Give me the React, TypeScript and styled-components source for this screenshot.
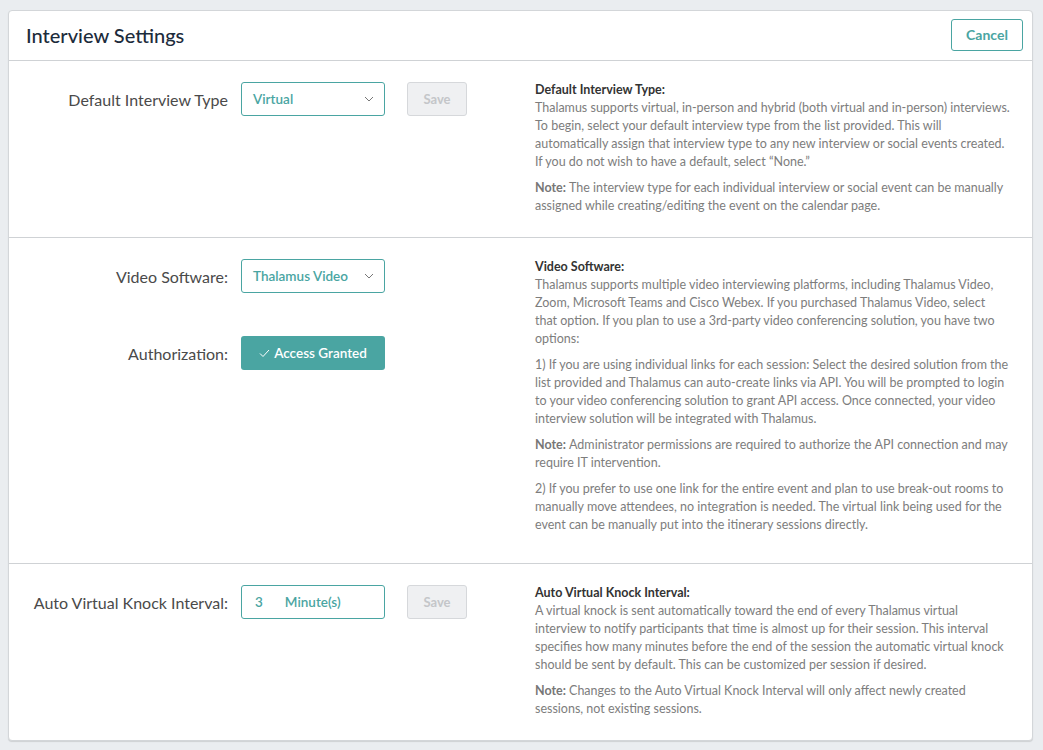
import React, { FC } from 'react';
import styled, { createGlobalStyle } from 'styled-components';

const teal = '#4aa5a2';

const GlobalStyle = createGlobalStyle`
  * {
    box-sizing: border-box;
  }

  body {
    margin: 0;
    background-color: #eaedf0;
    font-family: Lato, 'Open Sans', Arial, sans-serif;
  }
`;

const Page = styled.div`
  padding: 10px 10px 10px 8px;
`;

const Card = styled.div`
  background-color: #fff;
  border: 1px solid #d3d6d9;
  border-radius: 4px;
  box-shadow: 0 1px 1px rgba(0, 0, 0, 0.12);
`;

const Header = styled.div`
  height: 50px;
  display: flex;
  align-items: center;
  justify-content: space-between;
  padding: 0 9px 2px 17px;
  border-bottom: 1px solid #cfd2d5;
`;

const Title = styled.h1`
  margin: 0;
  font-size: 20px;
  font-weight: 500;
  color: #1c2b3b;
`;

const CancelButton = styled.button`
  width: 72px;
  height: 32px;
  border: 1px solid ${teal};
  border-radius: 3px;
  background-color: #fff;
  color: ${teal};
  font-family: inherit;
  font-size: 14px;
  font-weight: 700;
  cursor: pointer;
`;

const Section = styled.div<{ $minHeight: number; $last?: boolean }>`
  display: flex;
  min-height: ${(p) => p.$minHeight}px;
  padding: 21px 12px 13px 0;
  border-bottom: ${(p) => (p.$last ? 'none' : '1px solid #cfd2d5')};
`;

const Controls = styled.div<{ $gap: number }>`
  width: 526px;
  flex-shrink: 0;
  display: flex;
  flex-direction: column;
  gap: ${(p) => p.$gap}px;
`;

const Row = styled.div`
  display: flex;
  align-items: center;
`;

const Label = styled.label`
  width: 219px;
  padding-right: 13px;
  text-align: right;
  font-size: 16px;
  color: #4a4a4a;
  flex-shrink: 0;
  box-sizing: content-box;
`;

const SelectBox = styled.div`
  width: 144px;
  height: 34px;
  border: 1px solid ${teal};
  border-radius: 3px;
  display: flex;
  align-items: center;
  justify-content: space-between;
  padding: 0 10px 0 11px;
  color: ${teal};
  font-size: 13.5px;
  font-weight: 600;
`;

const IntervalBox = styled(SelectBox)`
  justify-content: flex-start;
  gap: 22px;
  padding-left: 13px;
`;

const SaveButton = styled.button`
  margin-left: 22px;
  width: 60px;
  height: 34px;
  border: 1px solid #d6d8db;
  border-radius: 3px;
  background-color: #eff0f2;
  color: #c4c6c9;
  font-family: inherit;
  font-size: 13px;
  font-weight: 700;
`;

const GrantedButton = styled.button`
  width: 144px;
  height: 34px;
  border: none;
  border-radius: 3px;
  background-color: ${teal};
  color: #fff;
  font-family: inherit;
  font-size: 13.5px;
  font-weight: 600;
  display: flex;
  align-items: center;
  justify-content: center;
  gap: 4px;
`;

const Help = styled.div`
  flex: 1;
  font-size: 12.5px;
  line-height: 18px;
  color: #7d7d7d;
`;

const HelpTitle = styled.div`
  font-weight: 700;
  color: #333;
  line-height: 16px;
  margin-bottom: 1px;
`;

const Para = styled.p`
  margin: 0 0 8px;

  & b {
    color: #777;
  }
`;

const Chevron: FC = () => (
  <svg width="10" height="6" viewBox="0 0 10 6" fill="none">
    <path d="M1 1l4 4 4-4" stroke="#777" strokeWidth="1" />
  </svg>
);

const Check: FC = () => (
  <svg width="11" height="9" viewBox="0 0 11 9" fill="none">
    <path d="M1 4.5l3 3L10 1" stroke="#fff" strokeWidth="1" />
  </svg>
);

const App: FC = () => {
  return (
    <Page>
      <GlobalStyle />
      <Card>
        <Header>
          <Title>Interview Settings</Title>
          <CancelButton>Cancel</CancelButton>
        </Header>

        <Section $minHeight={177}>
          <Controls $gap={0}>
            <Row>
              <Label>Default Interview Type</Label>
              <SelectBox>
                Virtual
                <Chevron />
              </SelectBox>
              <SaveButton disabled>Save</SaveButton>
            </Row>
          </Controls>
          <Help>
            <HelpTitle>Default Interview Type:</HelpTitle>
            <Para>
              Thalamus supports virtual, in-person and hybrid (both virtual and in-person) interviews.
              <br />
              To begin, select your default interview type from the list provided. This will
              <br />
              automatically assign that interview type to any new interview or social events created.
              <br />
              If you do not wish to have a default, select “None.”
            </Para>
            <Para>
              <b>Note: </b>The interview type for each individual interview or social event can be
              manually
              <br />
              assigned while creating/editing the event on the calendar page.
            </Para>
          </Help>
        </Section>

        <Section $minHeight={326}>
          <Controls $gap={43}>
            <Row>
              <Label>Video Software:</Label>
              <SelectBox>
                Thalamus Video
                <Chevron />
              </SelectBox>
            </Row>
            <Row>
              <Label>Authorization:</Label>
              <GrantedButton>
                <Check />
                Access Granted
              </GrantedButton>
            </Row>
          </Controls>
          <Help>
            <HelpTitle>Video Software:</HelpTitle>
            <Para>
              Thalamus supports multiple video interviewing platforms, including Thalamus Video,
              <br />
              Zoom, Microsoft Teams and Cisco Webex. If you purchased Thalamus Video, select
              <br />
              that option. If you plan to use a 3rd-party video conferencing solution, you have two
              <br />
              options:
            </Para>
            <Para>
              1) If you are using individual links for each session: Select the desired solution from the
              <br />
              list provided and Thalamus can auto-create links via API. You will be prompted to login
              <br />
              to your video conferencing solution to grant API access. Once connected, your video
              <br />
              interview solution will be integrated with Thalamus.
            </Para>
            <Para>
              <b>Note: </b>Administrator permissions are required to authorize the API connection and
              may
              <br />
              require IT intervention.
            </Para>
            <Para>
              2) If you prefer to use one link for the entire event and plan to use break-out rooms to
              <br />
              manually move attendees, no integration is needed. The virtual link being used for the
              <br />
              event can be manually put into the itinerary sessions directly.
            </Para>
          </Help>
        </Section>

        <Section $minHeight={176} $last>
          <Controls $gap={0}>
            <Row>
              <Label>Auto Virtual Knock Interval:</Label>
              <IntervalBox>
                <span>3</span>
                <span>Minute(s)</span>
              </IntervalBox>
              <SaveButton disabled>Save</SaveButton>
            </Row>
          </Controls>
          <Help>
            <HelpTitle>Auto Virtual Knock Interval:</HelpTitle>
            <Para>
              A virtual knock is sent automatically toward the end of every Thalamus virtual
              <br />
              interview to notify participants that time is almost up for their session. This interval
              <br />
              specifies how many minutes before the end of the session the automatic virtual knock
              <br />
              should be sent by default. This can be customized per session if desired.
            </Para>
            <Para>
              <b>Note: </b>Changes to the Auto Virtual Knock Interval will only affect newly created
              <br />
              sessions, not existing sessions.
            </Para>
          </Help>
        </Section>
      </Card>
    </Page>
  );
};

export default App;
